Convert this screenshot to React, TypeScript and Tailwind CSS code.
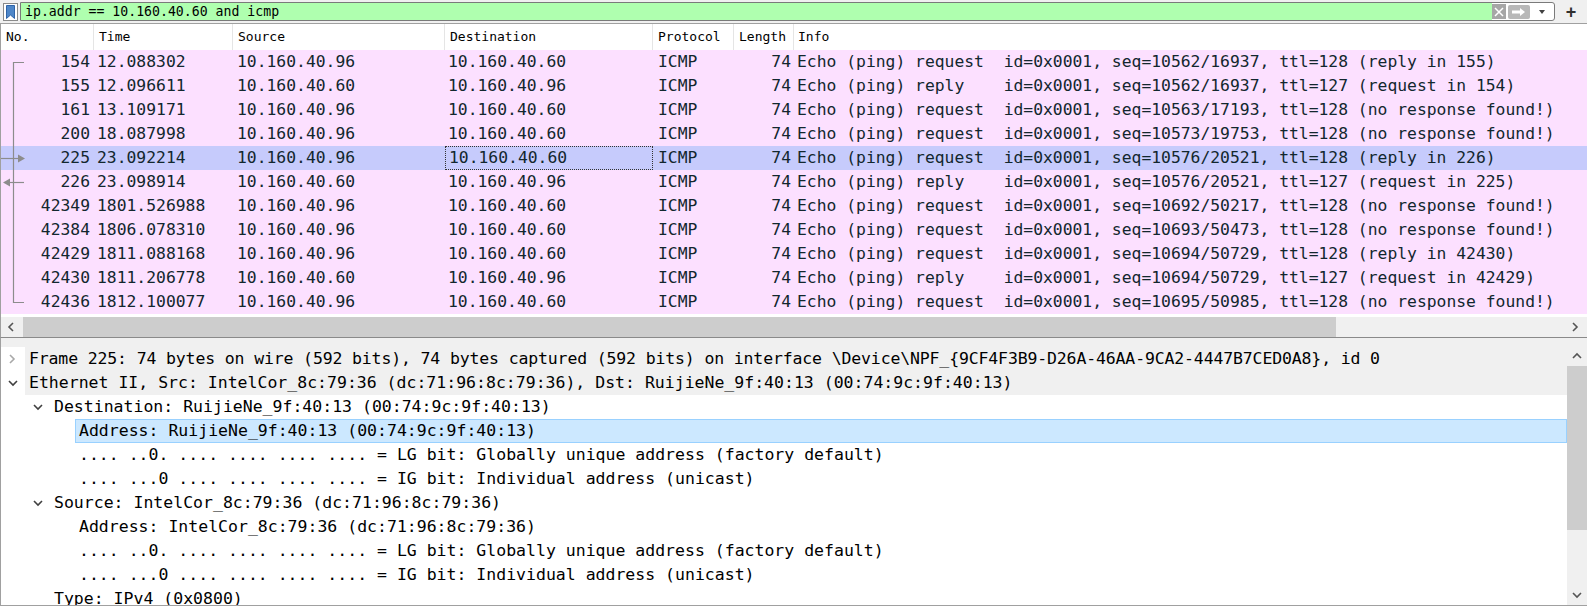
import React from "react";

const mono = "font-['DejaVu_Sans_Mono','Liberation_Mono',monospace]";

type Packet = {
  no: string;
  time: string;
  src: string;
  dst: string;
  info: string;
  selected?: boolean;
};

const packets: Packet[] = [
  { no: "154", time: "12.088302", src: "10.160.40.96", dst: "10.160.40.60", info: "Echo (ping) request  id=0x0001, seq=10562/16937, ttl=128 (reply in 155)" },
  { no: "155", time: "12.096611", src: "10.160.40.60", dst: "10.160.40.96", info: "Echo (ping) reply    id=0x0001, seq=10562/16937, ttl=127 (request in 154)" },
  { no: "161", time: "13.109171", src: "10.160.40.96", dst: "10.160.40.60", info: "Echo (ping) request  id=0x0001, seq=10563/17193, ttl=128 (no response found!)" },
  { no: "200", time: "18.087998", src: "10.160.40.96", dst: "10.160.40.60", info: "Echo (ping) request  id=0x0001, seq=10573/19753, ttl=128 (no response found!)" },
  { no: "225", time: "23.092214", src: "10.160.40.96", dst: "10.160.40.60", info: "Echo (ping) request  id=0x0001, seq=10576/20521, ttl=128 (reply in 226)", selected: true },
  { no: "226", time: "23.098914", src: "10.160.40.60", dst: "10.160.40.96", info: "Echo (ping) reply    id=0x0001, seq=10576/20521, ttl=127 (request in 225)" },
  { no: "42349", time: "1801.526988", src: "10.160.40.96", dst: "10.160.40.60", info: "Echo (ping) request  id=0x0001, seq=10692/50217, ttl=128 (no response found!)" },
  { no: "42384", time: "1806.078310", src: "10.160.40.96", dst: "10.160.40.60", info: "Echo (ping) request  id=0x0001, seq=10693/50473, ttl=128 (no response found!)" },
  { no: "42429", time: "1811.088168", src: "10.160.40.96", dst: "10.160.40.60", info: "Echo (ping) request  id=0x0001, seq=10694/50729, ttl=128 (reply in 42430)" },
  { no: "42430", time: "1811.206778", src: "10.160.40.60", dst: "10.160.40.96", info: "Echo (ping) reply    id=0x0001, seq=10694/50729, ttl=127 (request in 42429)" },
  { no: "42436", time: "1812.100077", src: "10.160.40.96", dst: "10.160.40.60", info: "Echo (ping) request  id=0x0001, seq=10695/50985, ttl=128 (no response found!)" },
];

type Detail = {
  lvl: number;
  chev?: "open" | "closed";
  text: string;
  gray?: boolean;
  selected?: boolean;
  tight?: boolean;
};

const details: Detail[] = [
  { lvl: 0, chev: "closed", gray: true, tight: true, text: "Frame 225: 74 bytes on wire (592 bits), 74 bytes captured (592 bits) on interface \\Device\\NPF_{9CF4F3B9-D26A-46AA-9CA2-4447B7CED0A8}, id 0" },
  { lvl: 0, chev: "open", gray: true, text: "Ethernet II, Src: IntelCor_8c:79:36 (dc:71:96:8c:79:36), Dst: RuijieNe_9f:40:13 (00:74:9c:9f:40:13)" },
  { lvl: 1, chev: "open", text: "Destination: RuijieNe_9f:40:13 (00:74:9c:9f:40:13)" },
  { lvl: 2, selected: true, text: "Address: RuijieNe_9f:40:13 (00:74:9c:9f:40:13)" },
  { lvl: 2, text: ".... ..0. .... .... .... .... = LG bit: Globally unique address (factory default)" },
  { lvl: 2, text: ".... ...0 .... .... .... .... = IG bit: Individual address (unicast)" },
  { lvl: 1, chev: "open", text: "Source: IntelCor_8c:79:36 (dc:71:96:8c:79:36)" },
  { lvl: 2, text: "Address: IntelCor_8c:79:36 (dc:71:96:8c:79:36)" },
  { lvl: 2, text: ".... ..0. .... .... .... .... = LG bit: Globally unique address (factory default)" },
  { lvl: 2, text: ".... ...0 .... .... .... .... = IG bit: Individual address (unicast)" },
  { lvl: 1, text: "Type: IPv4 (0x0800)" },
];

function Chevron({ dir, color }: { dir: "right" | "down" | "left" | "up"; color: string }) {
  const d = {
    right: "M2 1 L6 5 L2 9",
    left: "M6 1 L2 5 L6 9",
    down: "M1 3 L5 7 L9 3",
    up: "M1 7 L5 3 L9 7",
  }[dir];
  return (
    <svg width="10" height="10" viewBox="0 0 10 10">
      <path d={d} fill="none" stroke={color} strokeWidth="1.6" />
    </svg>
  );
}

function FilterBar() {
  return (
    <div className="flex h-[24px] items-center border-b border-[#a0a0a0] bg-[#f0f0f0]">
      <div className="ml-[3px] flex h-[18px] w-[15px] items-center justify-center border border-[#8a8a8a] bg-white">
        <svg width="9" height="14" viewBox="0 0 9 14">
          <path d="M0.5 0.5 H8.5 V13.5 L4.5 10 L0.5 13.5 Z" fill="#4e86c8" stroke="#2f64a8" strokeWidth="1" />
        </svg>
      </div>
      <div className="ml-[2px] flex h-[19px] flex-1 items-center rounded-r-[3px] border border-[#7a7a7a] bg-white">
        <div className={`flex h-full flex-1 items-center bg-[#afffaf] pl-[4px] text-[13.2px] text-black ${mono}`}>
          ip.addr == 10.160.40.60 and icmp
        </div>
        <div className="flex h-[15px] w-[14px] items-center justify-center bg-[#a6a6a6]">
          <svg width="10" height="10" viewBox="0 0 10 10">
            <path d="M1 1 L9 9 M9 1 L1 9" stroke="#fff" strokeWidth="1.5" />
          </svg>
        </div>
        <div className="ml-[2px] flex h-[14px] w-[22px] items-center justify-center rounded-[2px] bg-[#b8b8b8]">
          <svg width="16" height="10" viewBox="0 0 16 10">
            <path d="M1 3.5 H9 V1 L14 5 L9 9 V6.5 H1 Z" fill="#fff" />
          </svg>
        </div>
        <div className="flex w-[24px] justify-center">
          <svg width="8" height="6" viewBox="0 0 8 6">
            <path d="M1 1 H7 L4 5 Z" fill="#404040" />
          </svg>
        </div>
      </div>
      <div className="flex w-[32px] justify-center text-[18px] font-bold leading-none text-[#303030] font-['Liberation_Sans',sans-serif]">
        +
      </div>
    </div>
  );
}

const cols = ["w-[93px]", "w-[139px]", "w-[212px]", "w-[208px]", "w-[81px]", "w-[60px]"];

function PacketList() {
  const headers = ["No.", "Time", "Source", "Destination", "Protocol", "Length"];
  return (
    <div className="border-l border-[#a0a0a0] bg-white">
      <div className={`flex h-[26px] items-center text-[13px] text-black ${mono}`}>
        {headers.map((h, i) => (
          <div key={h} className={`${cols[i]} flex h-full shrink-0 items-center border-r border-[#e5e5e5] pl-[5px]`}>
            {h}
          </div>
        ))}
        <div className="flex-1 pl-[4px]">Info</div>
      </div>
      <div className={`relative text-[16.35px] text-[#12272e] ${mono}`}>
        {packets.map((p) => (
          <div key={p.no} className={`flex h-[24px] items-center whitespace-pre ${p.selected ? "bg-[#c6cbfc]" : "bg-[#fce0ff]"}`}>
            <div className={`${cols[0]} shrink-0 pr-[4px] text-right`}>{p.no}</div>
            <div className={`${cols[1]} shrink-0 pl-[3px]`}>{p.time}</div>
            <div className={`${cols[2]} shrink-0 pl-[4px]`}>{p.src}</div>
            <div className={`${cols[3]} flex h-full shrink-0 items-center pl-[3px] ${p.selected ? "border border-dotted border-[#333]" : ""}`}>
              {p.dst}
            </div>
            <div className={`${cols[4]} shrink-0 pl-[5px]`}>ICMP</div>
            <div className={`${cols[5]} shrink-0 pr-[3px] text-right`}>74</div>
            <div className="flex-1 pl-[3px]">{p.info}</div>
          </div>
        ))}
        <svg className="absolute left-0 top-0" width="30" height="264" viewBox="0 0 30 264">
          <g stroke="#8c8c8c" strokeWidth="1.2" fill="none">
            <path d="M23 12.5 H12.5 V252.5 H23" />
            <path d="M0 108.5 H18" />
            <path d="M6 132.5 H23" />
          </g>
          <path d="M17 104.5 L24 108.5 L17 112.5 Z" fill="#8c8c8c" />
          <path d="M9 128.5 L2 132.5 L9 136.5 Z" fill="#8c8c8c" />
        </svg>
      </div>
      <div className="h-[3px] bg-white" />
      <div className="flex h-[20px] items-center bg-[#f0f0f0]">
        <div className="flex w-[22px] justify-center">
          <Chevron dir="left" color="#555" />
        </div>
        <div className="h-full w-[1313px] bg-[#cdcdcd]" />
        <div className="flex-1" />
        <div className="flex w-[22px] justify-center">
          <Chevron dir="right" color="#555" />
        </div>
      </div>
    </div>
  );
}

function DetailPane() {
  return (
    <div className="flex h-[269px] border-y border-l border-t-[#8a8a8a] border-b-[#a0a0a0] border-l-[#a0a0a0] bg-white">
      <div className={`flex-1 overflow-hidden text-[16.5px] text-black ${mono}`}>
        <div className="h-[9px] bg-[#f0f0f0]" />
        {details.map((d, i) => (
          <div key={i} className="flex h-[24px] items-center whitespace-pre">
            <div className="shrink-0" style={{ width: d.lvl * 25 }} />
            <div className="flex w-[24px] shrink-0 justify-center">
              {d.chev === "closed" && <Chevron dir="right" color="#a8a8a8" />}
              {d.chev === "open" && <Chevron dir="down" color="#404040" />}
            </div>
            <div
              className={`flex h-full flex-1 items-center ${d.gray ? "bg-[#f0f0f0]" : ""} ${
                d.tight ? "tracking-[-0.145px]" : ""
              } ${d.selected ? "border border-[#99d1ff] bg-[#cce8ff] pl-[3px]" : "pl-[4px]"}`}
            >
              {d.text}
            </div>
          </div>
        ))}
      </div>
      <div className="flex w-[20px] shrink-0 flex-col bg-[#f0f0f0] pt-[7px]">
        <div className="flex h-[21px] items-center justify-center">
          <Chevron dir="up" color="#555" />
        </div>
        <div className="h-[164px] bg-[#cdcdcd]" />
        <div className="flex-1" />
        <div className="flex h-[21px] items-center justify-center">
          <Chevron dir="down" color="#555" />
        </div>
      </div>
    </div>
  );
}

export default function App() {
  return (
    <div className="h-[608px] w-[1587px] overflow-hidden bg-white">
      <FilterBar />
      <PacketList />
      <DetailPane />
    </div>
  );
}
